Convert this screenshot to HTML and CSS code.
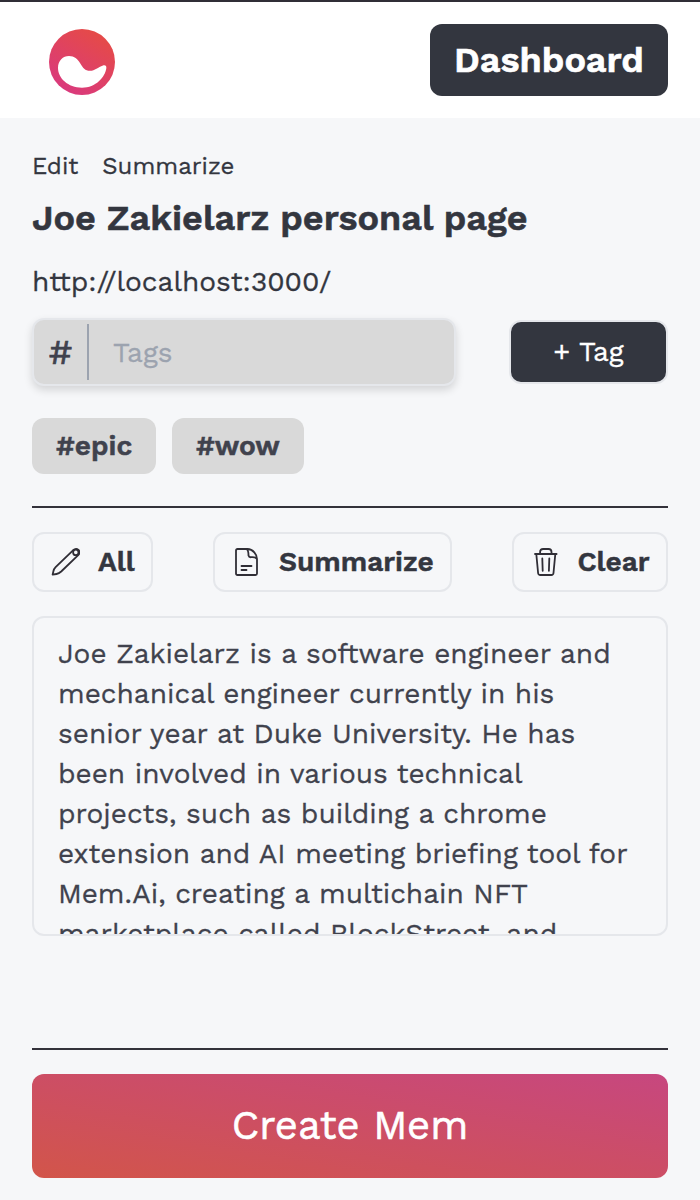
FILE: index.html
```html
<!DOCTYPE html>
<html lang="en">
<head>
<meta charset="utf-8">
<title>Mem</title>
<link rel="stylesheet" href="styles.css">
</head>
<body>
<header class="header">
  <svg class="logo" viewBox="0 0 66 66">
    <defs><linearGradient id="brand" x1="0.25" y1="1" x2="0.8" y2="0.1"><stop offset="0" stop-color="#d9397f"/><stop offset="1" stop-color="#e54a48"/></linearGradient></defs>
    <circle cx="33" cy="33" r="33" fill="url(#brand)"/>
    <path fill="#fff" d="M9 39C9 31.500 14 27 20 27C25.500 27 28.500 30 31 34C34 39 36 41.800 41 41.800C46 41.800 49 38 54 36.400C56.500 35.800 57.700 37 57.300 39.500C56 48 47 58.700 33 58.700C19 58.700 9 49 9 39Z"/>
  </svg>
  <button class="dashboard"><span>Dashboard</span></button>
</header>
<main class="main">
  <nav class="nav"><a class="edit">Edit</a><a class="sum">Summarize</a></nav>
  <h1 class="title">Joe Zakielarz personal page</h1>
  <p class="url">http://localhost:3000/</p>
  <div class="tag-row">
    <div class="tag-field"><span class="hash">#</span><span class="placeholder">Tags</span></div>
    <button class="add-tag"><span>+ Tag</span></button>
  </div>
  <div class="chips"><span class="chip chip-epic">#epic</span><span class="chip chip-wow">#wow</span></div>
  <hr class="rule">
  <div class="actions">
    <button class="action all">
      <svg class="icon" viewBox="0 0 30 30"><path d="M2.600 27.700L3.400 24.200Q3.900 21.900 5.600 20.200L23 3.300C27 -0.200 31.800 4.300 28.200 8.200L11.200 24.500Q9 26.500 6.500 27Z"/><circle cx="25.800" cy="5.400" r="2.700"/></svg>
      <span>All</span>
    </button>
    <button class="action summarize">
      <svg class="icon" viewBox="0 0 30 30"><path d="M6.500 2H16.500C22 2 26 7.500 26 12V26.500Q26 28 24.500 28H6.500Q5 28 5 26.500V3.500Q5 2 6.500 2M15.500 2Q17.500 3 17.500 8.500Q18 10.500 20 10.200Q24.500 9.800 26 12M10.500 19H20.500M10.500 23H15.500"/></svg>
      <span>Summarize</span>
    </button>
    <button class="action clear">
      <svg class="icon" viewBox="0 0 30 30"><path d="M5 7H26.600M6.300 7L8.100 26Q8.300 28 10.300 28H21.300Q23.300 28 23.500 26L25.300 7M10.100 7V5Q10.100 2 13.100 2H18.500Q21.500 2 21.500 5V7M12.300 11.500L12.700 23.800M19.300 11.500L18.900 23.800"/></svg>
      <span>Clear</span>
    </button>
  </div>
  <div class="summary">
    <p class="text">Joe Zakielarz is a software engineer and mechanical engineer currently in his senior year at Duke University. He has been involved in various technical projects, such as building a chrome extension and AI meeting briefing tool for Mem.Ai, creating a multichain NFT marketplace called BlockStreet, and</p>
  </div>
  <hr class="rule bottom">
  <button class="create"><span>Create Mem</span></button>
</main>
</body>
</html>
```
FILE: styles.css
```css
* { box-sizing: border-box; margin: 0; }
body {
  height: 1200px; overflow: hidden; background: #f6f7f9; color: #33363f;
  font-family: "Work Sans", Inter, sans-serif; font-size: 28px; line-height: 40px;
  -webkit-text-stroke: 0.3px;
}
button { font: inherit; color: inherit; border: 0; padding: 0; background: none; white-space: nowrap; }
.header {
  height: 118px; border-top: 2px solid #302e36; background: #fff;
  display: flex; justify-content: space-between; align-items: center; padding: 0 32px 0 49px;
}
.logo { width: 66px; height: 66px; margin-top: 4px; }
.dashboard {
  width: 238px; height: 72px; border-radius: 12px; background: #33363f; color: #fff;
  font-size: 36px; font-weight: 600; -webkit-text-stroke: 0.7px;
}
.main { padding: 32px 32px 0; display: flex; flex-direction: column; }
.nav { display: flex; gap: 24px; font-size: 24px; line-height: 32px; }
.title { margin-top: 16px; font-size: 36px; font-weight: 600; white-space: nowrap; -webkit-text-stroke: 0.6px; }
.url { margin-top: 24px; }
.tag-row { margin-top: 16px; display: flex; justify-content: space-between; align-items: center; }
.tag-field {
  width: 424px; height: 68px; border: 2px solid #e5e7eb; border-radius: 12px; background: #d9d9d9;
  display: flex; align-items: center; box-shadow: 0 4px 8px rgba(0, 0, 0, .14);
}
.hash {
  width: 55px; height: 56px; padding-left: 15px; border-right: 2px solid #9ca3af;
  font-size: 36px; line-height: 56px; color: #40424d; -webkit-text-stroke: 0.7px;
}
.placeholder { margin: 1px 0 0 24px; color: #9ca3af; }
.add-tag { width: 159px; height: 64px; border: 2px solid #e5e7eb; border-radius: 12px; background: #33363f; color: #fff; }
.chips { margin-top: 32px; display: flex; gap: 16px; }
.chip { height: 56px; padding-left: 24px; border-radius: 12px; background: #d9d9d9; color: #40424d; font-weight: 600; line-height: 56px; }
.chip-epic { width: 124px; }
.chip-wow { width: 132px; }
.rule { width: 100%; height: 2px; border: 0; background: #33323b; margin-top: 32px; }
.actions { margin-top: 24px; display: flex; justify-content: space-between; }
.action {
  height: 60px; border: 2px solid #e5e7eb; border-radius: 12px; padding-left: 16px;
  display: flex; align-items: center; gap: 18px; font-weight: 600;
}
.chip, .action { -webkit-text-stroke: 0.5px; }
.all { width: 121px; }
.summarize { width: 239px; }
.clear { width: 156px; gap: 17.500px; }
.icon { width: 30px; height: 30px; flex: none; fill: none; stroke: #302e36; stroke-width: 1.800; stroke-linecap: round; stroke-linejoin: round; }
.summary {
  margin-top: 24px; height: 320px; border: 2px solid #e5e7eb; border-radius: 12px;
  padding: 16px 24px; overflow: hidden; color: #40424d;
}
.bottom { margin-top: 112px; }
.create {
  margin-top: 24px; height: 104px; border-radius: 12px; color: #fff; font-size: 40px;
  -webkit-text-stroke: 0.6px;
  background: linear-gradient(to top right, #d2554a, #c7477f);
}
```
